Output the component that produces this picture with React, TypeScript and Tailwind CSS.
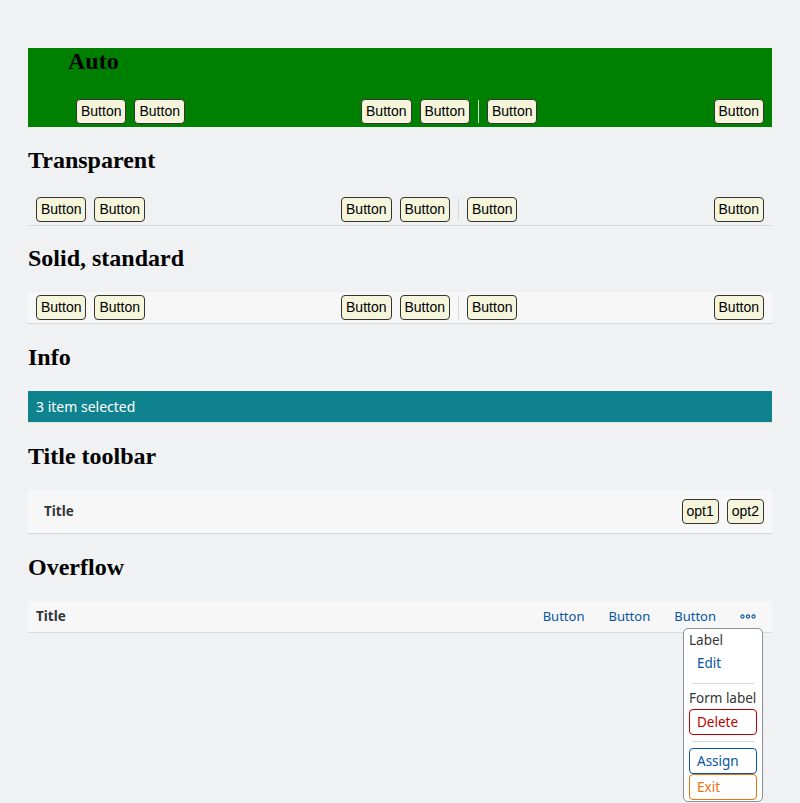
const sans = "font-['Noto_Sans',sans-serif]"

const Btn = ({ children }: { children: React.ReactNode }) => (
    <button className="h-[25px] px-1 rounded-[4px] border border-[#333] bg-[#f5f5dc] text-[14px] leading-[17px] text-black font-['Liberation_Sans',Arial,sans-serif]">
        {children}
    </button>
)

const Sep = () => <div className="w-px h-[23px] bg-[#d9d9d9]" />

const Heading = ({ children, top = "mt-5" }: { children: React.ReactNode; top?: string }) => (
    <h2
        className={`${top} mb-5 text-[24px] leading-[27px] font-bold text-black font-['Liberation_Serif','Times_New_Roman',serif]`}
    >
        {children}
    </h2>
)

// standard toolbar content: two buttons, spacer, group with separator, spacer, one button
const StdContent = () => (
    <>
        <div className="flex items-center gap-2">
            <Btn>Button</Btn>
            <Btn>Button</Btn>
        </div>
        <div className="flex-1" />
        <div className="flex items-center gap-2">
            <Btn>Button</Btn>
            <Btn>Button</Btn>
            <Sep />
            <Btn>Button</Btn>
        </div>
        <div className="flex-1" />
        <Btn>Button</Btn>
    </>
)

const LiteBtn = ({ children }: { children: React.ReactNode }) => (
    <button className="h-[26px] px-2 text-[13.5px] leading-[19px] text-[#0854a0] text-left">{children}</button>
)

const App = () => {
    return (
        <div className={`min-h-screen h-[803px] overflow-hidden bg-[#f0f1f3] px-7 pt-12 ${sans}`}>
            {/* Auto */}
            <div className="bg-[#008000] pl-10">
                <Heading top="mt-0">Auto</Heading>
                <div className="h-8 flex items-center px-2">
                    <StdContent />
                </div>
            </div>

            <Heading>Transparent</Heading>
            <div className="h-8 flex items-center px-2 border-b border-[#d9d9d9]">
                <StdContent />
            </div>

            <Heading top="mt-[19px]">Solid, standard</Heading>
            <div className="h-8 flex items-center px-2 bg-[#f7f7f7] border-b border-[#d9d9d9]">
                <StdContent />
            </div>

            <Heading>Info</Heading>
            <div className="h-8 flex items-center px-2 bg-[#0f828f] border-b border-[#dde0e3] text-white text-[14px]">
                3 item selected
            </div>

            <Heading>Title toolbar</Heading>
            <div className="h-11 flex items-center pl-4 pr-2 bg-[#f7f7f7] border-b border-[#d9d9d9]">
                <span className="text-[13.5px] font-bold text-[#32363a]">Title</span>
                <div className="flex-1" />
                <div className="flex items-center gap-2">
                    <Btn>opt1</Btn>
                    <Btn>opt2</Btn>
                </div>
            </div>

            <Heading>Overflow</Heading>
            <div className="relative h-8 flex items-center px-2 bg-[#f7f7f7] border-b border-[#d9d9d9]">
                <span className="text-[13.5px] font-bold text-[#32363a]">Title</span>
                <div className="flex-1" />
                <div className="flex items-center gap-2">
                    <button className="px-2 text-[13px] text-[#0854a0]">Button</button>
                    <button className="px-2 text-[13px] text-[#0854a0]">Button</button>
                    <button className="px-2 text-[13px] text-[#0854a0]">Button</button>
                    <button className="w-8 h-[26px] flex items-center justify-center">
                        <svg width="16" height="5" viewBox="0 0 16 5" fill="none" stroke="#0854a0" strokeWidth="1.1">
                            <circle cx="2.5" cy="2.5" r="1.6" />
                            <circle cx="8" cy="2.5" r="1.6" />
                            <circle cx="13.5" cy="2.5" r="1.6" />
                        </svg>
                    </button>
                </div>

                {/* overflow popover */}
                <div className="absolute right-[9px] top-[27px] w-[80px] bg-white border border-[#89919a] rounded-[5px] px-[5px] pt-[2px] pb-[1px] flex flex-col">
                    <div className="text-[13.5px] leading-[19px] text-[#32363a]">Label</div>
                    <LiteBtn>Edit</LiteBtn>
                    <div className="mx-[3px] mt-[7px] mb-[5px] h-px bg-[#d9d9d9]" />
                    <div className="text-[13.5px] leading-[19px] text-[#32363a] whitespace-nowrap">Form label</div>
                    <button className="mt-px h-[26px] px-[7px] text-left rounded-[4px] border border-[#bb0000] bg-white text-[13.5px] text-[#bb0000]">
                        Delete
                    </button>
                    <div className="mx-[3px] mt-[6px] mb-[6px] h-px bg-[#d9d9d9]" />
                    <button className="h-[26px] px-[7px] text-left rounded-[4px] border border-[#0854a0] bg-white text-[13.5px] text-[#0854a0]">
                        Assign
                    </button>
                    <button className="h-[26px] px-[7px] text-left rounded-[4px] border border-[#e9730c] bg-white text-[13.5px] text-[#e9730c]">
                        Exit
                    </button>
                </div>
            </div>
        </div>
    )
}

export default App
